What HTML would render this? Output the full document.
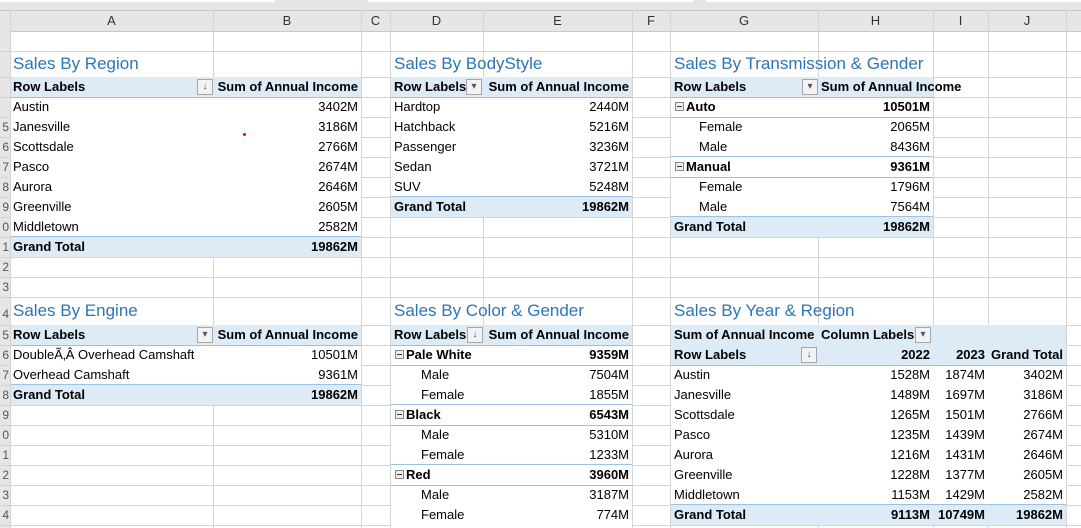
<!DOCTYPE html><html><head><style>
body{margin:0;width:1081px;height:528px;overflow:hidden;background:#fff;position:relative;font-family:"Liberation Sans",sans-serif;font-size:13px;color:#000}
div{position:absolute;box-sizing:border-box}
.v{width:1px;top:10px;height:518px;background:#d4d4d4}
.h{height:1px;left:0;width:1081px;background:#d4d4d4}
.c{height:20px;line-height:20px;white-space:nowrap;padding-left:3px}
.r{text-align:right;padding-right:3px;padding-left:0}
.b{font-weight:bold}
.t{font-size:17px;color:#2e75b6;white-space:nowrap;padding-left:3px}
.f{background:#ddebf7}
.w{background:#fff}
.bt{border-top:1px solid #9bc2e6}
.bb{border-bottom:1px solid #9bc2e6}
.dd{width:16px;height:16px;border:1px solid #a6a6a6;background:#f3f3f3;font-size:10px;line-height:14px;text-align:center;color:#555}
.hd{top:10px;height:21px;line-height:21px;text-align:center;color:#333;font-size:13px}
.mn{width:9px;height:9px;border:1px solid #888;background:#eee}
.mn:after{content:"";position:absolute;left:1px;top:3px;width:5px;height:1px;background:#333}
.rn{left:0;width:9px;text-align:right;overflow:hidden;font-size:12px;color:#555;height:20px;line-height:20px}
</style></head><body>
<div style="left:0;top:0;width:1081px;height:31px;background:#e6e6e6"></div>
<div style="left:0;top:0;width:275px;height:2px;background:#fff"></div>
<div style="left:368px;top:0;width:325px;height:2px;background:#fff"></div>
<div style="left:706px;top:0;width:375px;height:2px;background:#fff"></div>
<div style="left:0;top:10px;width:1081px;height:1px;background:#c8c8c8"></div>
<div style="left:0;top:31px;width:1081px;height:1px;background:#c8c8c8"></div>
<div style="left:0;top:31px;width:10px;height:497px;background:#e6e6e6"></div>
<!-- column headers -->
<div class="hd" style="left:10px;width:203px">A</div>
<div class="hd" style="left:213px;width:148px">B</div>
<div class="hd" style="left:361px;width:29px">C</div>
<div class="hd" style="left:390px;width:93px">D</div>
<div class="hd" style="left:483px;width:149px">E</div>
<div class="hd" style="left:632px;width:38px">F</div>
<div class="hd" style="left:670px;width:148px">G</div>
<div class="hd" style="left:818px;width:115px">H</div>
<div class="hd" style="left:933px;width:55px">I</div>
<div class="hd" style="left:988px;width:78px">J</div>
<!-- vertical grid -->
<div class="v" style="left:10px"></div><div class="v" style="left:213px"></div><div class="v" style="left:361px"></div><div class="v" style="left:390px"></div><div class="v" style="left:483px"></div><div class="v" style="left:632px"></div><div class="v" style="left:670px"></div><div class="v" style="left:818px"></div><div class="v" style="left:933px"></div><div class="v" style="left:988px"></div><div class="v" style="left:1066px"></div>
<!-- horizontal grid -->
<div class="h" style="top:51px"></div><div class="h" style="top:77px"></div><div class="h" style="top:97px"></div><div class="h" style="top:117px"></div><div class="h" style="top:137px"></div><div class="h" style="top:157px"></div><div class="h" style="top:177px"></div><div class="h" style="top:197px"></div><div class="h" style="top:217px"></div><div class="h" style="top:237px"></div><div class="h" style="top:257px"></div><div class="h" style="top:277px"></div><div class="h" style="top:297px"></div><div class="h" style="top:325px"></div><div class="h" style="top:345px"></div><div class="h" style="top:365px"></div><div class="h" style="top:385px"></div><div class="h" style="top:405px"></div><div class="h" style="top:425px"></div><div class="h" style="top:445px"></div><div class="h" style="top:465px"></div><div class="h" style="top:485px"></div><div class="h" style="top:505px"></div><div class="h" style="top:525px"></div>
<!-- row numbers -->
<div class="rn" style="top:117px">5</div><div class="rn" style="top:137px">6</div><div class="rn" style="top:157px">7</div><div class="rn" style="top:177px">8</div><div class="rn" style="top:197px">9</div><div class="rn" style="top:217px">0</div><div class="rn" style="top:237px">1</div><div class="rn" style="top:257px">2</div><div class="rn" style="top:277px">3</div><div class="rn" style="top:304px">4</div><div class="rn" style="top:325px">5</div><div class="rn" style="top:345px">6</div><div class="rn" style="top:365px">7</div><div class="rn" style="top:385px">8</div><div class="rn" style="top:405px">9</div><div class="rn" style="top:425px">0</div><div class="rn" style="top:445px">1</div><div class="rn" style="top:465px">2</div><div class="rn" style="top:485px">3</div><div class="rn" style="top:505px">4</div>

<!-- Sales By Region -->
<div class="t" style="left:10px;top:54px">Sales By Region</div>
<div class="w" style="left:11px;top:97px;width:350px;height:140px"></div>
<div class="f bb" style="left:11px;top:77px;width:350px;height:21px"></div>
<div class="f bt" style="left:11px;top:236px;width:350px;height:21px"></div>
<div class="c b" style="left:10px;top:77px">Row Labels</div>
<div class="dd" style="left:197px;top:79px">↓</div>
<div class="c b r" style="left:213px;top:77px;width:148px">Sum of Annual Income</div>
<div class="c" style="left:10px;top:97px">Austin</div><div class="c r" style="left:213px;top:97px;width:148px">3402M</div>
<div class="c" style="left:10px;top:117px">Janesville</div><div class="c r" style="left:213px;top:117px;width:148px">3186M</div>
<div class="c" style="left:10px;top:137px">Scottsdale</div><div class="c r" style="left:213px;top:137px;width:148px">2766M</div>
<div class="c" style="left:10px;top:157px">Pasco</div><div class="c r" style="left:213px;top:157px;width:148px">2674M</div>
<div class="c" style="left:10px;top:177px">Aurora</div><div class="c r" style="left:213px;top:177px;width:148px">2646M</div>
<div class="c" style="left:10px;top:197px">Greenville</div><div class="c r" style="left:213px;top:197px;width:148px">2605M</div>
<div class="c" style="left:10px;top:217px">Middletown</div><div class="c r" style="left:213px;top:217px;width:148px">2582M</div>
<div class="c b" style="left:10px;top:237px">Grand Total</div><div class="c b r" style="left:213px;top:237px;width:148px">19862M</div>
<div style="left:243px;top:133px;width:3px;height:3px;background:#e00;border-radius:2px"></div>

<!-- Sales By BodyStyle -->
<div class="t" style="left:391px;top:54px">Sales By BodyStyle</div>
<div class="w" style="left:391px;top:97px;width:241px;height:100px"></div>
<div class="f bb" style="left:391px;top:77px;width:241px;height:21px"></div>
<div class="f bt" style="left:391px;top:196px;width:241px;height:21px"></div>
<div class="c b" style="left:391px;top:77px">Row Labels</div>
<div class="dd" style="left:466px;top:79px">▾</div>
<div class="c b r" style="left:483px;top:77px;width:149px">Sum of Annual Income</div>
<div class="c" style="left:391px;top:97px">Hardtop</div><div class="c r" style="left:483px;top:97px;width:149px">2440M</div>
<div class="c" style="left:391px;top:117px">Hatchback</div><div class="c r" style="left:483px;top:117px;width:149px">5216M</div>
<div class="c" style="left:391px;top:137px">Passenger</div><div class="c r" style="left:483px;top:137px;width:149px">3236M</div>
<div class="c" style="left:391px;top:157px">Sedan</div><div class="c r" style="left:483px;top:157px;width:149px">3721M</div>
<div class="c" style="left:391px;top:177px">SUV</div><div class="c r" style="left:483px;top:177px;width:149px">5248M</div>
<div class="c b" style="left:391px;top:197px">Grand Total</div><div class="c b r" style="left:483px;top:197px;width:149px">19862M</div>

<!-- Transmission -->
<div class="t" style="left:671px;top:54px">Sales By Transmission &amp; Gender</div>
<div class="w" style="left:671px;top:97px;width:262px;height:120px"></div>
<div class="f bb" style="left:671px;top:77px;width:262px;height:21px"></div>
<div class="bt bb" style="left:671px;top:156px;width:262px;height:22px"></div>
<div class="f bt" style="left:671px;top:216px;width:262px;height:21px"></div>
<div class="bb" style="left:671px;top:97px;width:262px;height:21px"></div>
<div class="c b" style="left:671px;top:77px">Row Labels</div>
<div class="dd" style="left:802px;top:79px">▾</div>
<div class="c b" style="left:818px;top:77px">Sum of Annual Income</div>
<div class="mn" style="left:675px;top:102px"></div><div class="c b" style="left:684px;top:97px;padding-left:2px">Auto</div><div class="c b r" style="left:818px;top:97px;width:115px">10501M</div>
<div class="c" style="left:696px;top:117px">Female</div><div class="c r" style="left:818px;top:117px;width:115px">2065M</div>
<div class="c" style="left:696px;top:137px">Male</div><div class="c r" style="left:818px;top:137px;width:115px">8436M</div>
<div class="mn" style="left:675px;top:162px"></div><div class="c b" style="left:684px;top:157px;padding-left:2px">Manual</div><div class="c b r" style="left:818px;top:157px;width:115px">9361M</div>
<div class="c" style="left:696px;top:177px">Female</div><div class="c r" style="left:818px;top:177px;width:115px">1796M</div>
<div class="c" style="left:696px;top:197px">Male</div><div class="c r" style="left:818px;top:197px;width:115px">7564M</div>
<div class="c b" style="left:671px;top:217px">Grand Total</div><div class="c b r" style="left:818px;top:217px;width:115px">19862M</div>

<!-- Engine -->
<div class="t" style="left:10px;top:301px">Sales By Engine</div>
<div class="w" style="left:11px;top:345px;width:350px;height:40px"></div>
<div class="f bb" style="left:11px;top:325px;width:350px;height:21px"></div>
<div class="f bt" style="left:11px;top:384px;width:350px;height:21px"></div>
<div class="c b" style="left:10px;top:325px">Row Labels</div>
<div class="dd" style="left:197px;top:327px">▾</div>
<div class="c b r" style="left:213px;top:325px;width:148px">Sum of Annual Income</div>
<div class="c" style="left:10px;top:345px">DoubleÃ‚Â Overhead Camshaft</div><div class="c r" style="left:213px;top:345px;width:148px">10501M</div>
<div class="c" style="left:10px;top:365px">Overhead Camshaft</div><div class="c r" style="left:213px;top:365px;width:148px">9361M</div>
<div class="c b" style="left:10px;top:385px">Grand Total</div><div class="c b r" style="left:213px;top:385px;width:148px">19862M</div>

<!-- Color -->
<div class="t" style="left:391px;top:301px">Sales By Color &amp; Gender</div>
<div class="w" style="left:391px;top:345px;width:241px;height:183px"></div>
<div class="f bb" style="left:391px;top:325px;width:241px;height:21px"></div>
<div class="bb" style="left:391px;top:345px;width:241px;height:21px"></div>
<div class="bt bb" style="left:391px;top:404px;width:241px;height:22px"></div>
<div class="bt bb" style="left:391px;top:464px;width:241px;height:22px"></div>
<div class="c b" style="left:391px;top:325px">Row Labels</div>
<div class="dd" style="left:467px;top:327px">↓</div>
<div class="c b r" style="left:483px;top:325px;width:149px">Sum of Annual Income</div>
<div class="mn" style="left:395px;top:350px"></div><div class="c b" style="left:404px;top:345px;padding-left:2px">Pale White</div><div class="c b r" style="left:483px;top:345px;width:149px">9359M</div>
<div class="c" style="left:418px;top:365px">Male</div><div class="c r" style="left:483px;top:365px;width:149px">7504M</div>
<div class="c" style="left:418px;top:385px">Female</div><div class="c r" style="left:483px;top:385px;width:149px">1855M</div>
<div class="mn" style="left:395px;top:410px"></div><div class="c b" style="left:404px;top:405px;padding-left:2px">Black</div><div class="c b r" style="left:483px;top:405px;width:149px">6543M</div>
<div class="c" style="left:418px;top:425px">Male</div><div class="c r" style="left:483px;top:425px;width:149px">5310M</div>
<div class="c" style="left:418px;top:445px">Female</div><div class="c r" style="left:483px;top:445px;width:149px">1233M</div>
<div class="mn" style="left:395px;top:470px"></div><div class="c b" style="left:404px;top:465px;padding-left:2px">Red</div><div class="c b r" style="left:483px;top:465px;width:149px">3960M</div>
<div class="c" style="left:418px;top:485px">Male</div><div class="c r" style="left:483px;top:485px;width:149px">3187M</div>
<div class="c" style="left:418px;top:505px">Female</div><div class="c r" style="left:483px;top:505px;width:149px">774M</div>

<!-- Year -->
<div class="t" style="left:671px;top:301px">Sales By Year &amp; Region</div>
<div class="w" style="left:671px;top:365px;width:395px;height:140px"></div>
<div class="f bb" style="left:671px;top:325px;width:395px;height:41px"></div>
<div class="f bt" style="left:671px;top:504px;width:395px;height:21px"></div>
<div class="c b" style="left:671px;top:325px">Sum of Annual Income</div>
<div class="c b" style="left:818px;top:325px">Column Labels</div>
<div class="dd" style="left:915px;top:327px">▾</div>
<div class="c b" style="left:671px;top:345px">Row Labels</div>
<div class="dd" style="left:801px;top:347px">↓</div>
<div class="c b r" style="left:818px;top:345px;width:115px">2022</div>
<div class="c b r" style="left:933px;top:345px;width:55px">2023</div>
<div class="c b r" style="left:988px;top:345px;width:78px">Grand Total</div>
<div class="c" style="left:671px;top:365px">Austin</div><div class="c r" style="left:818px;top:365px;width:115px">1528M</div><div class="c r" style="left:933px;top:365px;width:55px">1874M</div><div class="c r" style="left:988px;top:365px;width:78px">3402M</div>
<div class="c" style="left:671px;top:385px">Janesville</div><div class="c r" style="left:818px;top:385px;width:115px">1489M</div><div class="c r" style="left:933px;top:385px;width:55px">1697M</div><div class="c r" style="left:988px;top:385px;width:78px">3186M</div>
<div class="c" style="left:671px;top:405px">Scottsdale</div><div class="c r" style="left:818px;top:405px;width:115px">1265M</div><div class="c r" style="left:933px;top:405px;width:55px">1501M</div><div class="c r" style="left:988px;top:405px;width:78px">2766M</div>
<div class="c" style="left:671px;top:425px">Pasco</div><div class="c r" style="left:818px;top:425px;width:115px">1235M</div><div class="c r" style="left:933px;top:425px;width:55px">1439M</div><div class="c r" style="left:988px;top:425px;width:78px">2674M</div>
<div class="c" style="left:671px;top:445px">Aurora</div><div class="c r" style="left:818px;top:445px;width:115px">1216M</div><div class="c r" style="left:933px;top:445px;width:55px">1431M</div><div class="c r" style="left:988px;top:445px;width:78px">2646M</div>
<div class="c" style="left:671px;top:465px">Greenville</div><div class="c r" style="left:818px;top:465px;width:115px">1228M</div><div class="c r" style="left:933px;top:465px;width:55px">1377M</div><div class="c r" style="left:988px;top:465px;width:78px">2605M</div>
<div class="c" style="left:671px;top:485px">Middletown</div><div class="c r" style="left:818px;top:485px;width:115px">1153M</div><div class="c r" style="left:933px;top:485px;width:55px">1429M</div><div class="c r" style="left:988px;top:485px;width:78px">2582M</div>
<div class="c b" style="left:671px;top:505px">Grand Total</div><div class="c b r" style="left:818px;top:505px;width:115px">9113M</div><div class="c b r" style="left:933px;top:505px;width:55px">10749M</div><div class="c b r" style="left:988px;top:505px;width:78px">19862M</div>
</body></html>
